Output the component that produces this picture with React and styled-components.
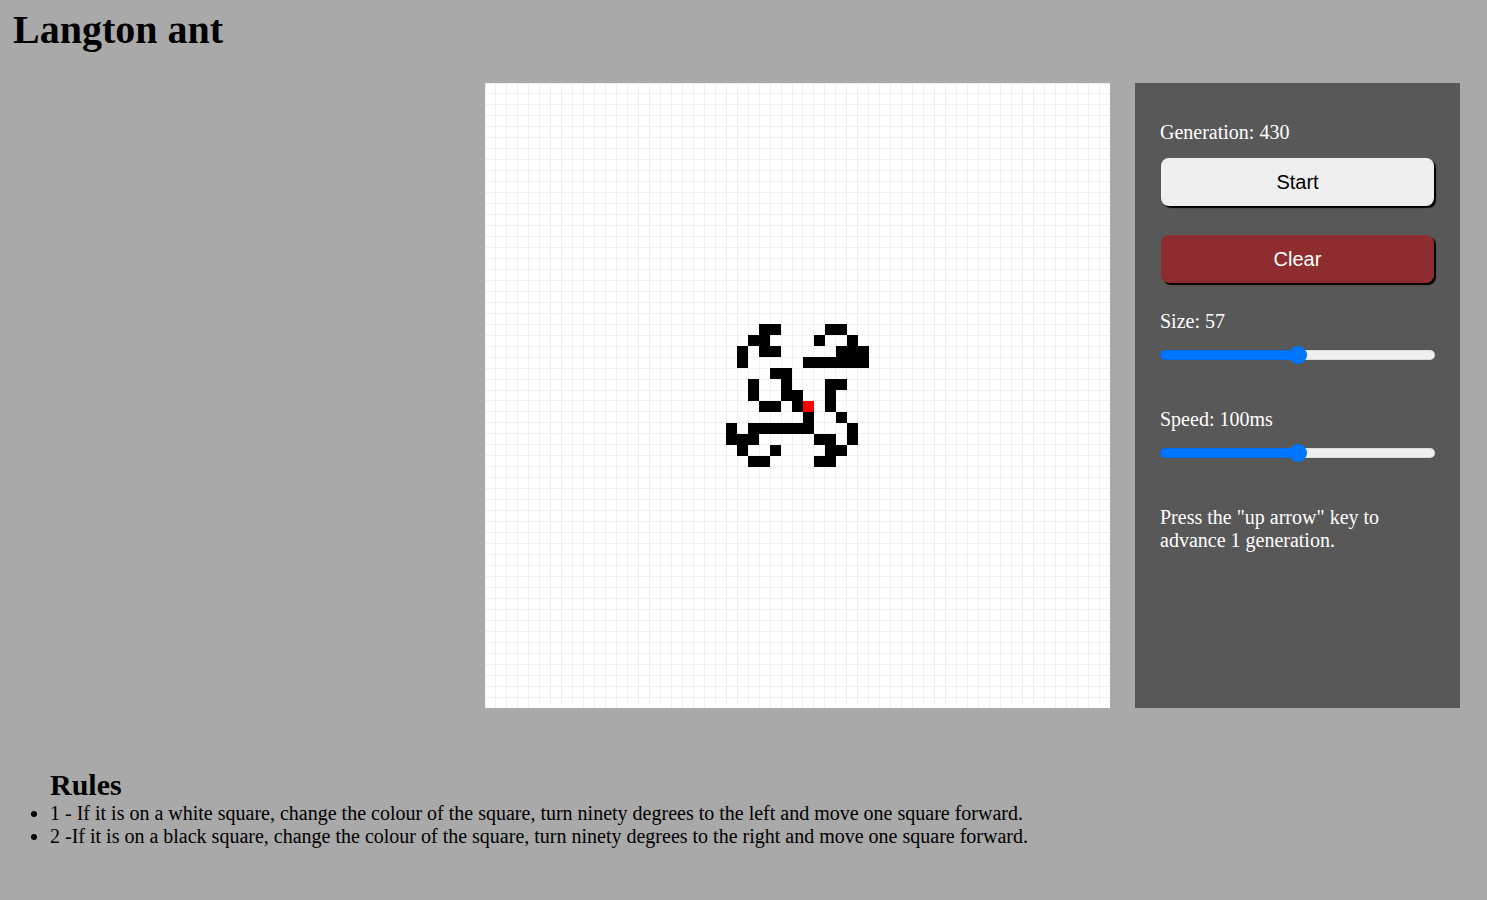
import React, { useState } from "react";
import styled, { createGlobalStyle } from "styled-components";

const GRID = 57;
const BOARD = 625;
const CELL = BOARD / GRID;

// cells of the ant's trail after 430 generations, relative to (22, 22)
const TRAIL = [
  [3, 4, 9, 10],
  [2, 3, 8, 11],
  [1, 3, 4, 10, 11, 12],
  [1, 7, 8, 9, 10, 11, 12],
  [4, 5],
  [2, 5, 9, 10],
  [2, 5, 6, 9],
  [3, 4, 6, 9],
  [7, 10],
  [0, 2, 3, 4, 5, 6, 7, 11],
  [0, 1, 2, 8, 9, 11],
  [1, 4, 9, 10],
  [2, 3, 8, 9],
];
const ANT = { x: 29, y: 29 };

const GlobalStyle = createGlobalStyle`
  body {
    margin: 0;
    background-color: #a9a9a9;
    font-family: "Liberation Serif", "Times New Roman", serif;
    color: #000;
  }
`;

const Board = () => {
  const lines = [];
  for (let i = 0; i <= GRID; i++) {
    const p = i * CELL;
    lines.push(<line key={"v" + i} x1={p} y1={0} x2={p} y2={BOARD} />);
    lines.push(<line key={"h" + i} x1={0} y1={p} x2={BOARD} y2={p} />);
  }
  const cells = [];
  TRAIL.forEach((row, r) =>
    row.forEach((c) =>
      cells.push(
        <rect
          key={r + "-" + c}
          x={(22 + c) * CELL}
          y={(22 + r) * CELL}
          width={CELL}
          height={CELL}
        />
      )
    )
  );
  return (
    <BoardSvg width={BOARD} height={BOARD} viewBox={`0 0 ${BOARD} ${BOARD}`}>
      <rect className="bg" width={BOARD} height={BOARD} />
      <g className="lines">{lines}</g>
      <g className="cells">{cells}</g>
      <rect
        className="ant"
        x={ANT.x * CELL}
        y={ANT.y * CELL}
        width={CELL}
        height={CELL}
      />
    </BoardSvg>
  );
};

const Slider = ({ min, max, value, onChange }) => {
  const pct = ((value - min) / (max - min)) * 100;
  return (
    <Range
      type="range"
      min={min}
      max={max}
      value={value}
      onChange={(e) => onChange(Number(e.target.value))}
      style={{
        background: `linear-gradient(to right, #0075ff ${pct}%, #efefef ${pct}%)`,
      }}
    />
  );
};

const App = () => {
  const [size, setSize] = useState(57);
  const [speed, setSpeed] = useState(100);

  return (
    <>
      <GlobalStyle />
      <Title>Langton ant</Title>
      <Main>
        <Board />
        <Panel>
          <Label>Generation: 430</Label>
          <Button>Start</Button>
          <Button $danger>Clear</Button>
          <Label $gap="27px">Size: {size}</Label>
          <Slider min={14} max={100} value={size} onChange={setSize} />
          <Label $gap="48px">Speed: {speed}ms</Label>
          <Slider min={0} max={200} value={speed} onChange={setSpeed} />
          <Hint>
            Press the "up arrow" key to advance 1 generation.
          </Hint>
        </Panel>
      </Main>
      <Rules>
        <h2>Rules</h2>
        <ul>
          <li>
            1 - If it is on a white square, change the colour of the square,
            turn ninety degrees to the left and move one square forward.
          </li>
          <li>
            2 -If it is on a black square, change the colour of the square,
            turn ninety degrees to the right and move one square forward.
          </li>
        </ul>
      </Rules>
    </>
  );
};

export default App;

const Title = styled.h1`
  margin: 0;
  padding: 8px 13px 0;
  font-size: 40px;
  font-weight: bold;
  line-height: 44px;
`;

const Main = styled.div`
  display: flex;
  justify-content: flex-end;
  align-items: stretch;
  gap: 25px;
  padding: 31px 27px 0 0;
`;

const BoardSvg = styled.svg`
  display: block;
  flex-shrink: 0;

  .bg {
    fill: #fff;
  }
  .lines line {
    stroke: #f0f0f0;
    stroke-width: 1;
    shape-rendering: crispEdges;
  }
  .cells rect {
    fill: #000;
    shape-rendering: crispEdges;
  }
  .ant {
    fill: #ff0000;
    shape-rendering: crispEdges;
  }
`;

const Panel = styled.div`
  display: flex;
  flex-direction: column;
  box-sizing: border-box;
  width: 325px;
  height: 625px;
  padding: 38px 25px 0;
  background-color: #585858;
  color: #fff;
`;

const Label = styled.div`
  margin-top: ${(p) => p.$gap || "0"};
  font-size: 20px;
  line-height: 23px;
`;

const Button = styled.button`
  width: calc(100% - 2px);
  height: 48px;
  margin: ${(p) => (p.$danger ? "29px" : "14px")} 0 0 1px;
  border: none;
  border-radius: 8px;
  box-shadow: 2px 2px 1px #000;
  background-color: ${(p) => (p.$danger ? "#8e2c2f" : "#efefef")};
  color: ${(p) => (p.$danger ? "#fff" : "#000")};
  font-family: "Liberation Sans", Arial, sans-serif;
  font-size: 20px;
  cursor: pointer;
`;

const Range = styled.input`
  -webkit-appearance: none;
  appearance: none;
  width: 100%;
  height: 10px;
  margin: 17px 0 0;
  border-radius: 5px;
  box-shadow: inset 0 0 0 1px rgba(0, 0, 0, 0.08);
  outline: none;

  &::-webkit-slider-thumb {
    -webkit-appearance: none;
    appearance: none;
    width: 18px;
    height: 18px;
    border-radius: 50%;
    background: #0075ff;
    cursor: pointer;
  }
`;

const Hint = styled.p`
  margin: 48px 0 0;
  font-size: 20px;
  line-height: 23px;
`;

const Rules = styled.div`
  margin-top: 60px;

  h2 {
    margin: 0 0 0 50px;
    font-size: 30px;
    font-weight: bold;
    line-height: 34px;
  }

  ul {
    margin: 0;
    padding-left: 50px;
    font-size: 20px;
    line-height: 23px;
  }
`;
